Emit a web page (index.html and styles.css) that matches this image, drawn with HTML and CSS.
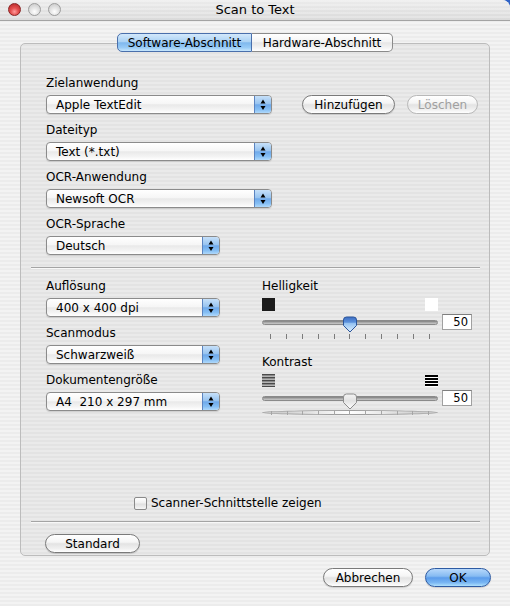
FILE: index.html
```html
<!DOCTYPE html>
<html lang="de">
<head>
<meta charset="utf-8">
<title>Scan to Text</title>
<link rel="stylesheet" href="styles.css">
</head>
<body>
<div class="window">
  <div class="titlebar">
    <div class="lights">
      <span class="light red"></span>
      <span class="light"></span>
      <span class="light"></span>
    </div>
    <div class="title">Scan to Text</div>
    <div class="spacer"></div>
  </div>

  <div class="content">
    <div class="tabs">
      <div class="tab active">Software-Abschnitt</div>
      <div class="tab last">Hardware-Abschnitt</div>
    </div>

    <div class="box">
      <div class="section">
        <div class="field">
          <div class="label">Zielanwendung</div>
          <div class="row">
            <div class="popup w-wide">Apple TextEdit<span class="arrows"><svg width="16" height="17" viewBox="0 0 16 17"><path d="M5.5 7.5 L10.5 7.5 L8 3.5 Z M5.5 10 L10.5 10 L8 14 Z" fill="#000"/></svg></span></div>
            <div class="btn add">Hinzufügen</div>
            <div class="btn del disabled">Löschen</div>
          </div>
        </div>
        <div class="field">
          <div class="label">Dateityp</div>
          <div class="popup w-wide">Text (*.txt)<span class="arrows"><svg width="16" height="17" viewBox="0 0 16 17"><path d="M5.5 7.5 L10.5 7.5 L8 3.5 Z M5.5 10 L10.5 10 L8 14 Z" fill="#000"/></svg></span></div>
        </div>
        <div class="field">
          <div class="label">OCR-Anwendung</div>
          <div class="popup w-wide">Newsoft OCR<span class="arrows"><svg width="16" height="17" viewBox="0 0 16 17"><path d="M5.5 7.5 L10.5 7.5 L8 3.5 Z M5.5 10 L10.5 10 L8 14 Z" fill="#000"/></svg></span></div>
        </div>
        <div class="field">
          <div class="label">OCR-Sprache</div>
          <div class="popup w-narrow">Deutsch<span class="arrows"><svg width="16" height="17" viewBox="0 0 16 17"><path d="M5.5 7.5 L10.5 7.5 L8 3.5 Z M5.5 10 L10.5 10 L8 14 Z" fill="#000"/></svg></span></div>
        </div>
      </div>

      <div class="sep sep-top"></div>

      <div class="section lower">
        <div class="col-left">
          <div class="field">
            <div class="label">Auflösung</div>
            <div class="popup w-narrow">400 x 400 dpi<span class="arrows"><svg width="16" height="17" viewBox="0 0 16 17"><path d="M5.5 7.5 L10.5 7.5 L8 3.5 Z M5.5 10 L10.5 10 L8 14 Z" fill="#000"/></svg></span></div>
          </div>
          <div class="field">
            <div class="label">Scanmodus</div>
            <div class="popup w-narrow">Schwarzweiß<span class="arrows"><svg width="16" height="17" viewBox="0 0 16 17"><path d="M5.5 7.5 L10.5 7.5 L8 3.5 Z M5.5 10 L10.5 10 L8 14 Z" fill="#000"/></svg></span></div>
          </div>
          <div class="field">
            <div class="label">Dokumentengröße</div>
            <div class="popup w-narrow">A4&nbsp; 210 x 297 mm<span class="arrows"><svg width="16" height="17" viewBox="0 0 16 17"><path d="M5.5 7.5 L10.5 7.5 L8 3.5 Z M5.5 10 L10.5 10 L8 14 Z" fill="#000"/></svg></span></div>
          </div>
        </div>

        <div class="col-right">
          <div class="label">Helligkeit</div>
          <div class="icons">
            <span class="sq black"></span>
            <span class="sq white"></span>
          </div>
          <div class="slider-row">
            <div class="slider">
              <div class="track"></div>
              <svg class="thumb" width="16" height="17" viewBox="0 0 16 17">
                <defs>
                  <linearGradient id="tb" x1="0" y1="0" x2="0" y2="1">
                    <stop offset="0" stop-color="#3d6ec4"/>
                    <stop offset="0.35" stop-color="#5d92dc"/>
                    <stop offset="0.42" stop-color="#93c1f1"/>
                    <stop offset="1" stop-color="#dff0fe"/>
                  </linearGradient>
                </defs>
                <path d="M1.5 4 Q1.5 1 4.5 1 H11.5 Q14.5 1 14.5 4 V9.5 L8 16 L1.5 9.5 Z" fill="url(#tb)" stroke="#2b5499" stroke-width="1"/>
              </svg>
            </div>
            <div class="value">50</div>
          </div>
          <div class="ticks">
            <i></i><i></i><i></i><i></i><i></i><i></i><i></i><i></i><i></i><i></i><i></i>
          </div>

          <div class="label kontrast">Kontrast</div>
          <div class="icons">
            <span class="sq lines-gray"></span>
            <span class="sq lines-black"></span>
          </div>
          <div class="slider-row">
            <div class="slider">
              <div class="track"></div>
              <svg class="thumb thumb2" width="16" height="17" viewBox="0 0 16 17">
                <defs>
                  <linearGradient id="tw" x1="0" y1="0" x2="0" y2="1">
                    <stop offset="0" stop-color="#f4f4f4"/>
                    <stop offset="0.45" stop-color="#e2e2e2"/>
                    <stop offset="1" stop-color="#ffffff"/>
                  </linearGradient>
                </defs>
                <path d="M1.5 4 Q1.5 1 4.5 1 H11.5 Q14.5 1 14.5 4 V9.5 L8 16 L1.5 9.5 Z" fill="url(#tw)" stroke="#8c8c8c" stroke-width="1"/>
              </svg>
            </div>
            <div class="value">50</div>
          </div>
          <div class="ticks light">
            <i></i><i></i><i></i><i></i><i></i><i></i><i></i><i></i><i></i><i></i><i></i>
          </div>
        </div>
      </div>

      <div class="checkrow">
        <span class="checkbox"></span>
        <span class="check-label">Scanner-Schnittstelle zeigen</span>
      </div>

      <div class="sep sep-bottom"></div>

      <div class="btn standard">Standard</div>
    </div>

    <div class="footer">
      <div class="btn cancel">Abbrechen</div>
      <div class="btn ok">OK</div>
    </div>
  </div>
</div>
</body>
</html>
```

FILE: styles.css
```css
* { box-sizing: border-box; }

html, body {
  margin: 0;
  padding: 0;
}

body {
  width: 510px;
  height: 606px;
  overflow: hidden;
  font-family: "DejaVu Sans", "Liberation Sans", sans-serif;
  font-size: 12px;
  color: #000;
  background: linear-gradient(#2f62c6, #2f62c6) no-repeat right top / 12px 12px, #eeeeee;
}

.window {
  width: 510px;
  height: 606px;
  background: repeating-linear-gradient(to bottom, #ececec 0, #ececec 2px, #f3f3f3 2px, #f3f3f3 4px);
  border-top-right-radius: 8px;
  overflow: hidden;
}

/* title bar */
.titlebar {
  height: 21px;
  display: flex;
  align-items: center;
  background:
    repeating-linear-gradient(to bottom, rgba(255,255,255,0.25) 0, rgba(255,255,255,0.25) 2px, rgba(255,255,255,0) 2px, rgba(255,255,255,0) 4px),
    linear-gradient(#ececec, #dadada);
  border-bottom: 1px solid #a3a3a3;
}

.lights {
  width: 61px;
  padding-left: 8px;
  display: flex;
  gap: 7px;
  margin-top: -1px;
}

.light {
  width: 13px;
  height: 13px;
  border-radius: 50%;
  background: radial-gradient(circle at 50% 70%, #ffffff 0, #e9e9e9 35%, #c4c4c4 100%);
  border: 1px solid #9d9d9d;
}

.light.red {
  background: radial-gradient(circle at 50% 70%, #ff9c9c 0, #e4504f 40%, #b32222 100%);
  border-color: #8a2424;
}

.title {
  flex: 1;
  text-align: center;
  font-size: 13px;
  margin-top: -1px;
}

.spacer { width: 61px; }

/* content */
.content {
  padding: 12px 20px 0;
}

.tabs {
  display: flex;
  justify-content: center;
  margin-bottom: -9px;
  position: relative;
  z-index: 1;
}

.tab {
  height: 19px;
  display: flex;
  align-items: center;
  justify-content: center;
  border: 1px solid #8a8a8a;
  background: linear-gradient(#ffffff 0%, #f4f4f4 45%, #e6e6e6 52%, #f3f3f3 80%, #ffffff 100%);
}

.tab.active {
  width: 135px;
  border-color: #4a6fab;
  border-radius: 5px 0 0 5px;
  background: linear-gradient(#d3e8fb 0%, #abd2f4 45%, #7fb8ee 52%, #98cbf6 80%, #c8e7fd 100%);
}

.tab.last {
  width: 141px;
  border-left: none;
  border-radius: 0 5px 5px 0;
}

.box {
  border: 1px solid #bcbcbc;
  border-radius: 5px;
  background: rgba(0, 0, 0, 0.035);
  padding: 31px 9px 2px 10px;
}

.section {
  padding-left: 15px;
}

.field + .field {
  margin-top: 8px;
}

.label {
  height: 16px;
  line-height: 16px;
  margin-bottom: 4px;
}

.row {
  display: flex;
  align-items: center;
}

.popup {
  height: 19px;
  display: flex;
  align-items: center;
  padding-left: 9px;
  border: 1px solid #8b8b8b;
  border-radius: 4px;
  overflow: hidden;
  background: linear-gradient(#ffffff 0%, #f6f6f6 45%, #e9e9e9 52%, #f4f4f4 80%, #ffffff 100%);
  box-shadow: 0 1px 1px rgba(0, 0, 0, 0.12);
}

.w-wide { width: 226px; }
.w-narrow { width: 174px; }

.arrows {
  margin-left: auto;
  width: 17px;
  height: 17px;
  display: flex;
  align-items: center;
  justify-content: center;
  border-left: 1px solid #5b84c0;
  background: linear-gradient(#c6e0f9 0%, #98c4f0 45%, #6fa9ea 52%, #86bff4 80%, #b0d9fb 100%);
}

.btn {
  height: 19px;
  display: flex;
  align-items: center;
  justify-content: center;
  border: 1px solid #7a7a7a;
  border-radius: 10px;
  background: linear-gradient(#ffffff 0%, #f5f5f5 42%, #e3e3e3 52%, #f0f0f0 80%, #ffffff 100%);
  box-shadow: 0 1px 1px rgba(0, 0, 0, 0.15);
  color: #000;
}

.btn.add {
  width: 93px;
  margin-left: 30px;
}

.btn.del {
  width: 71px;
  margin-left: 12px;
}

.btn.disabled {
  color: #a0a0a0;
  border-color: #b8b8b8;
  box-shadow: none;
}

.sep {
  height: 2px;
  border-top: 1px solid #a4a4a4;
  border-bottom: 1px solid #f8f8f8;
}

.sep-top {
  margin-top: 12px;
  margin-bottom: 9px;
}

.lower {
  display: grid;
  grid-template-columns: 216px 210px;
}

.col-right .label {
  margin-bottom: 4px;
}

.label.kontrast {
  margin-top: 15px;
}

.icons {
  width: 176px;
  height: 13px;
  display: flex;
  justify-content: space-between;
}

.sq {
  width: 13px;
  height: 13px;
}

.sq.black {
  background: #1b1b1b;
}

.sq.white {
  background: #ffffff;
}

.sq.lines-gray {
  background: repeating-linear-gradient(to bottom, #4a4a4a 0, #4a4a4a 1px, #8a8a8a 1px, #8a8a8a 2px, #b4b4b4 2px, #b4b4b4 3px);
}

.sq.lines-black {
  background: repeating-linear-gradient(to bottom, #000 0, #000 2px, #fff 2px, #fff 3px);
  height: 12px;
  margin-top: 1px;
}

.slider-row {
  margin-top: 3px;
  height: 20px;
  display: flex;
}

.slider {
  width: 176px;
  height: 20px;
  position: relative;
}

.track {
  margin-top: 6px;
  height: 5px;
  border-radius: 3px;
  background: linear-gradient(#7d7d7d, #a9a9a9 50%, #c9c9c9);
  border: 1px solid #8a8a8a;
}

.thumb {
  position: absolute;
  left: 80px;
  top: 2px;
}

.thumb2 {
  top: 3px;
}

.value {
  margin-left: 4px;
  width: 30px;
  height: 16px;
  line-height: 14px;
  font-size: 11.5px;
  text-align: right;
  padding-right: 3px;
  background: #ffffff;
  border: 1px solid #a0a0a0;
  border-top-color: #7e7e7e;
}

.ticks {
  width: 176px;
  height: 5px;
  padding: 0 8px;
  display: flex;
  justify-content: space-between;
}

.ticks i {
  width: 1px;
  height: 5px;
  background: #7b7b7b;
}

.ticks.light i {
  background: #a5a5a5;
  height: 4px;
}

.checkrow {
  margin-top: 80px;
  height: 16px;
  display: flex;
  align-items: center;
  padding-left: 103px;
}

.checkbox {
  width: 13px;
  height: 13px;
  border: 1px solid #8a8a8a;
  border-radius: 2px;
  background: linear-gradient(#ffffff 0%, #f0f0f0 45%, #e0e0e0 55%, #f6f6f6 100%);
  margin-right: 4px;
}

.sep-bottom {
  margin-top: 10px;
}

.btn.standard {
  width: 95px;
  margin-top: 11px;
  margin-left: 14px;
}

.footer {
  margin-top: 12px;
  display: flex;
  justify-content: flex-end;
  gap: 12px;
  margin-right: -1px;
}

.btn.cancel { width: 90px; }

.btn.ok {
  width: 66px;
  border-color: #2e5ba3;
  background: linear-gradient(#b7d8fb 0%, #86bbf2 42%, #5b9ceb 52%, #79b6f3 80%, #aee0fd 100%);
}
```
